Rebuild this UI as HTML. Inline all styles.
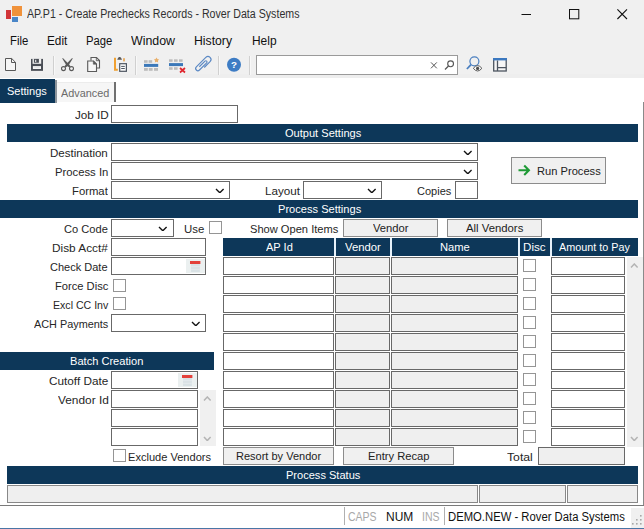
<!DOCTYPE html>
<html><head><meta charset="utf-8"><title>AP.P1 - Create Prechecks Records</title>
<style>
html,body{margin:0;padding:0;}
body{width:644px;height:529px;position:relative;overflow:hidden;background:#fff;font-family:"Liberation Sans",Arial,sans-serif;}
.t{position:absolute;white-space:nowrap;line-height:16px;transform-origin:0 50%;display:block;}
.b{position:absolute;box-sizing:border-box;}
.r{position:absolute;}
</style></head><body>
<div class="r" style="left:0px;top:0px;width:644px;height:78px;background:#f0f0f0;"></div>
<div class="r" style="left:0px;top:74px;width:644px;height:4px;background:#eeeeee;"></div>
<div class="r" style="left:6px;top:10px;width:5px;height:9px;background:#d13438;"></div>
<div class="r" style="left:12px;top:6px;width:10px;height:10px;background:#f0923b;"></div>
<div class="r" style="left:12px;top:17px;width:6px;height:5px;background:#4a86c8;"></div>
<span class="t" style="left:26.80px;top:5.84px;font-size:12px;color:#303030;transform:scaleX(0.8870);">AP.P1 - Create Prechecks Records - Rover Data Systems</span>
<svg class="r" style="left:515px;top:4px" width="120" height="22"><path d="M6.500 10.500h9.500" stroke="#111" stroke-width="1"/><rect x="54.500" y="5.500" width="9.300" height="9.300" fill="none" stroke="#111" stroke-width="1"/><path d="M102.400 5.400l9.600 9.600M112 5.400l-9.600 9.600" stroke="#111" stroke-width="1.100"/></svg>
<span class="t" style="left:10.00px;top:32.84px;font-size:12px;color:#111;transform:scaleX(0.9464);">File</span>
<span class="t" style="left:47.00px;top:32.84px;font-size:12px;color:#111;transform:scaleX(0.9817);">Edit</span>
<span class="t" style="left:85.75px;top:32.84px;font-size:12px;color:#111;transform:scaleX(0.9384);">Page</span>
<span class="t" style="left:130.75px;top:32.84px;font-size:12px;color:#111;transform:scaleX(1.0321);">Window</span>
<span class="t" style="left:194.00px;top:32.84px;font-size:12px;color:#111;transform:scaleX(1.0191);">History</span>
<span class="t" style="left:251.50px;top:32.84px;font-size:12px;color:#111;transform:scaleX(0.9947);">Help</span>
<div class="r" style="left:53px;top:56px;width:1px;height:19px;background:#d0d0d0;"></div>
<div class="r" style="left:54px;top:56px;width:1px;height:19px;background:#f8f8f8;"></div>
<div class="r" style="left:135px;top:56px;width:1px;height:19px;background:#d0d0d0;"></div>
<div class="r" style="left:136px;top:56px;width:1px;height:19px;background:#f8f8f8;"></div>
<div class="r" style="left:218px;top:56px;width:1px;height:19px;background:#d0d0d0;"></div>
<div class="r" style="left:219px;top:56px;width:1px;height:19px;background:#f8f8f8;"></div>
<div class="r" style="left:249px;top:56px;width:1px;height:19px;background:#d0d0d0;"></div>
<div class="r" style="left:250px;top:56px;width:1px;height:19px;background:#f8f8f8;"></div>
<div class="b" style="left:256px;top:55px;width:202px;height:20px;background:#fff;border:1px solid #9a9a9a;"></div>
<div class="r" style="left:0px;top:78px;width:644px;height:428px;background:#fff;"></div>
<div class="r" style="left:643px;top:101.5px;width:1px;height:404.5px;background:#8a8a8a;"></div>
<div class="r" style="left:0px;top:504.6px;width:644px;height:0.5px;background:#d0d0d0;"></div>
<div class="r" style="left:0px;top:505px;width:644px;height:1.4px;background:#7a7a7a;"></div>
<div class="r" style="left:0px;top:79px;width:54.5px;height:23.5px;background:#0d3759;"></div>
<div class="r" style="left:55px;top:80px;width:2px;height:22.5px;background:#8e959c;"></div>
<span class="t" style="left:7.00px;top:83.32px;font-size:11.5px;color:#fff;transform:scaleX(0.9578);">Settings</span>
<div class="r" style="left:57px;top:82px;width:57px;height:20px;background:#f6f6f6;"></div>
<div class="r" style="left:113.8px;top:82.3px;width:2px;height:19.5px;background:#707070;"></div>
<div class="r" style="left:57px;top:82px;width:57px;height:1px;background:#ececec;"></div>
<span class="t" style="left:60.50px;top:85.02px;font-size:11.5px;color:#6a6a6a;transform:scaleX(0.9443);">Advanced</span>
<div class="r" style="left:7px;top:124px;width:631px;height:18px;background:#0d3759;"></div>
<span class="t" style="left:284.50px;top:125.02px;font-size:11.5px;color:#fff;transform:scaleX(0.9613);">Output Settings</span>
<div class="r" style="left:0px;top:200px;width:638px;height:18px;background:#0d3759;"></div>
<span class="t" style="left:277.50px;top:201.02px;font-size:11.5px;color:#fff;transform:scaleX(0.9642);">Process Settings</span>
<div class="r" style="left:0px;top:352px;width:214px;height:18px;background:#0d3759;"></div>
<span class="t" style="left:70.00px;top:353.02px;font-size:11.5px;color:#fff;transform:scaleX(0.9636);">Batch Creation</span>
<div class="r" style="left:7px;top:466px;width:631px;height:18px;background:#0d3759;"></div>
<span class="t" style="left:286.00px;top:467.02px;font-size:11.5px;color:#fff;transform:scaleX(0.9607);">Process Status</span>
<span class="t" style="left:74.50px;top:107.19px;font-size:11px;color:#262626;transform:scaleX(1.0632);">Job ID</span>
<div class="b" style="left:111px;top:105px;width:127px;height:18px;background:#fff;border:1px solid #686868;"></div>
<span class="t" style="left:50.00px;top:145.19px;font-size:11px;color:#262626;transform:scaleX(1.0503);">Destination</span>
<div class="b" style="left:111px;top:143px;width:367px;height:18px;background:#fff;border:1px solid #686868;"></div>
<svg class="r" style="left:462.70px;top:149.60px" width="9.6" height="5.8"><path d="M1 1 L4.8 4.8 L8.6 1" fill="none" stroke="#111" stroke-width="1.35"/></svg>
<span class="t" style="left:54.50px;top:164.19px;font-size:11px;color:#262626;transform:scaleX(1.0257);">Process In</span>
<div class="b" style="left:111px;top:162px;width:367px;height:18px;background:#fff;border:1px solid #686868;"></div>
<svg class="r" style="left:462.70px;top:168.60px" width="9.6" height="5.8"><path d="M1 1 L4.8 4.8 L8.6 1" fill="none" stroke="#111" stroke-width="1.35"/></svg>
<span class="t" style="left:72.00px;top:183.19px;font-size:11px;color:#262626;transform:scaleX(1.0276);">Format</span>
<div class="b" style="left:111px;top:181px;width:119px;height:18px;background:#fff;border:1px solid #686868;"></div>
<svg class="r" style="left:215.20px;top:187.60px" width="9.6" height="5.8"><path d="M1 1 L4.8 4.8 L8.6 1" fill="none" stroke="#111" stroke-width="1.35"/></svg>
<span class="t" style="left:265.00px;top:183.19px;font-size:11px;color:#262626;transform:scaleX(1.0613);">Layout</span>
<div class="b" style="left:303px;top:181px;width:79px;height:18px;background:#fff;border:1px solid #686868;"></div>
<svg class="r" style="left:367.20px;top:187.60px" width="9.6" height="5.8"><path d="M1 1 L4.8 4.8 L8.6 1" fill="none" stroke="#111" stroke-width="1.35"/></svg>
<span class="t" style="left:417.00px;top:183.19px;font-size:11px;color:#262626;transform:scaleX(1.0017);">Copies</span>
<div class="b" style="left:455px;top:181px;width:23px;height:18px;background:#fff;border:1px solid #686868;"></div>
<div class="b" style="left:511px;top:157px;width:95px;height:27px;background:#f0f0f0;border:1px solid #8c8c8c;"></div>
<svg class="r" style="left:517px;top:164px" width="14" height="13"><path d="M1.500 6.300h10M7.200 1.600l4.700 4.700l-4.700 4.700" fill="none" stroke="#1f9a36" stroke-width="2.100"/></svg>
<span class="t" style="left:537.00px;top:162.82px;font-size:11.5px;color:#222;transform:scaleX(0.9676);">Run Process</span>
<span class="t" style="left:64.00px;top:221.19px;font-size:11px;color:#262626;transform:scaleX(1.0089);">Co Code</span>
<div class="b" style="left:111px;top:219px;width:63px;height:18px;background:#fff;border:1px solid #686868;"></div>
<svg class="r" style="left:158.20px;top:225.60px" width="9.6" height="5.8"><path d="M1 1 L4.8 4.8 L8.6 1" fill="none" stroke="#111" stroke-width="1.35"/></svg>
<span class="t" style="left:183.50px;top:221.19px;font-size:11px;color:#262626;transform:scaleX(1.0377);">Use</span>
<div class="b" style="left:209px;top:221px;width:13px;height:13px;background:#fff;border:1px solid #959595;"></div>
<span class="t" style="left:250.00px;top:221.19px;font-size:11px;color:#262626;transform:scaleX(1.0099);">Show Open Items</span>
<div class="b" style="left:343px;top:219px;width:95px;height:18px;background:#f0f0f0;border:1px solid #8c8c8c;"></div>
<span class="t" style="left:372.50px;top:219.82px;font-size:11.5px;color:#222;transform:scaleX(0.9753);">Vendor</span>
<div class="b" style="left:447px;top:219px;width:95px;height:18px;background:#f0f0f0;border:1px solid #8c8c8c;"></div>
<span class="t" style="left:465.50px;top:219.82px;font-size:11.5px;color:#222;transform:scaleX(0.9850);">All Vendors</span>
<span class="t" style="left:52.00px;top:240.19px;font-size:11px;color:#262626;transform:scaleX(1.0738);">Disb Acct#</span>
<div class="b" style="left:111px;top:238px;width:95px;height:18px;background:#fff;border:1px solid #686868;"></div>
<span class="t" style="left:50.25px;top:259.19px;font-size:11px;color:#262626;transform:scaleX(1.0014);">Check Date</span>
<div class="b" style="left:111px;top:257px;width:95px;height:18px;background:#fff;border:1px solid #686868;"></div>
<svg class="r" style="left:186px;top:259px" width="19" height="14" viewBox="0 0 19 14"><rect x="0" y="0" width="19" height="14" fill="#ebf0f0"/><rect x="4" y="2" width="10.400" height="3" fill="#e3413b"/><rect x="5" y="5" width="8.800" height="8" fill="#d9e2e5"/><path d="M5 7.700h8.800M5 10.300h8.800" stroke="#e9eef0" stroke-width="0.700"/></svg>
<span class="t" style="left:55.00px;top:278.19px;font-size:11px;color:#262626;transform:scaleX(1.0140);">Force Disc</span>
<div class="b" style="left:113px;top:279px;width:13px;height:13px;background:#fff;border:1px solid #959595;"></div>
<span class="t" style="left:52.50px;top:297.19px;font-size:11px;color:#262626;transform:scaleX(0.9625);">Excl CC Inv</span>
<div class="b" style="left:113px;top:297px;width:13px;height:13px;background:#fff;border:1px solid #959595;"></div>
<span class="t" style="left:33.50px;top:316.19px;font-size:11px;color:#262626;transform:scaleX(0.9882);">ACH Payments</span>
<div class="b" style="left:111px;top:314px;width:95px;height:18px;background:#fff;border:1px solid #686868;"></div>
<svg class="r" style="left:190.70px;top:320.60px" width="9.6" height="5.8"><path d="M1 1 L4.8 4.8 L8.6 1" fill="none" stroke="#111" stroke-width="1.35"/></svg>
<span class="t" style="left:49.00px;top:373.19px;font-size:11px;color:#262626;transform:scaleX(1.0696);">Cutoff Date</span>
<div class="b" style="left:111px;top:371px;width:87px;height:18px;background:#fff;border:1px solid #686868;"></div>
<svg class="r" style="left:178px;top:373px" width="19" height="14" viewBox="0 0 19 14"><rect x="0" y="0" width="19" height="14" fill="#ebf0f0"/><rect x="4" y="2" width="10.400" height="3" fill="#e3413b"/><rect x="5" y="5" width="8.800" height="8" fill="#d9e2e5"/><path d="M5 7.700h8.800M5 10.300h8.800" stroke="#e9eef0" stroke-width="0.700"/></svg>
<span class="t" style="left:57.50px;top:392.19px;font-size:11px;color:#262626;transform:scaleX(1.0787);">Vendor Id</span>
<div class="b" style="left:111px;top:390px;width:87px;height:18px;background:#fff;border:1px solid #686868;"></div>
<div class="b" style="left:111px;top:409px;width:87px;height:18px;background:#fff;border:1px solid #686868;"></div>
<div class="b" style="left:111px;top:428px;width:87px;height:18px;background:#fff;border:1px solid #686868;"></div>
<div class="r" style="left:200px;top:390px;width:16px;height:56px;background:#f0f0f0;"></div>
<svg class="r" style="left:203.40px;top:396.20px" width="8.6" height="5.6"><path d="M1 4.6 L4.3 1 L7.6 4.6" fill="none" stroke="#b4b4b4" stroke-width="1.5"/></svg>
<svg class="r" style="left:203.40px;top:435.50px" width="8.6" height="5.6"><path d="M1 1 L4.3 4.6 L7.6 1" fill="none" stroke="#b4b4b4" stroke-width="1.5"/></svg>
<div class="b" style="left:113px;top:449px;width:13px;height:13px;background:#fff;border:1px solid #959595;"></div>
<span class="t" style="left:128.25px;top:448.79px;font-size:11px;color:#262626;transform:scaleX(1.0060);">Exclude Vendors</span>
<div class="r" style="left:334px;top:238px;width:2px;height:18px;background:#e6f1fa;"></div>
<div class="r" style="left:390px;top:238px;width:2px;height:18px;background:#e6f1fa;"></div>
<div class="r" style="left:518px;top:238px;width:2px;height:18px;background:#e6f1fa;"></div>
<div class="r" style="left:550px;top:238px;width:2px;height:18px;background:#e6f1fa;"></div>
<div class="r" style="left:223px;top:238px;width:111px;height:18px;background:#0d3759;"></div>
<span class="t" style="left:265.50px;top:238.82px;font-size:11.5px;color:#fff;transform:scaleX(0.9599);">AP Id</span>
<div class="r" style="left:336px;top:238px;width:54px;height:18px;background:#0d3759;"></div>
<span class="t" style="left:344.50px;top:238.82px;font-size:11.5px;color:#fff;transform:scaleX(0.9822);">Vendor</span>
<div class="r" style="left:392px;top:238px;width:126px;height:18px;background:#0d3759;"></div>
<span class="t" style="left:439.50px;top:238.82px;font-size:11.5px;color:#fff;transform:scaleX(0.9714);">Name</span>
<div class="r" style="left:520px;top:238px;width:30px;height:18px;background:#0d3759;"></div>
<span class="t" style="left:523.25px;top:238.82px;font-size:11.5px;color:#fff;transform:scaleX(1.0085);">Disc</span>
<div class="r" style="left:552px;top:238px;width:86px;height:18px;background:#0d3759;"></div>
<span class="t" style="left:558.50px;top:238.82px;font-size:11.5px;color:#fff;transform:scaleX(0.9386);">Amount to Pay</span>
<div class="b" style="left:223px;top:257px;width:111px;height:18px;background:#fff;border:1px solid #686868;"></div>
<div class="b" style="left:335px;top:257px;width:55px;height:18px;background:#efefef;border:1px solid #686868;"></div>
<div class="b" style="left:391px;top:257px;width:127px;height:18px;background:#efefef;border:1px solid #686868;"></div>
<div class="b" style="left:523px;top:259px;width:13px;height:13px;background:#fff;border:1px solid #959595;"></div>
<div class="b" style="left:551px;top:257px;width:74px;height:18px;background:#fff;border:1px solid #686868;"></div>
<div class="b" style="left:223px;top:276px;width:111px;height:18px;background:#fff;border:1px solid #686868;"></div>
<div class="b" style="left:335px;top:276px;width:55px;height:18px;background:#efefef;border:1px solid #686868;"></div>
<div class="b" style="left:391px;top:276px;width:127px;height:18px;background:#efefef;border:1px solid #686868;"></div>
<div class="b" style="left:523px;top:278px;width:13px;height:13px;background:#fff;border:1px solid #959595;"></div>
<div class="b" style="left:551px;top:276px;width:74px;height:18px;background:#fff;border:1px solid #686868;"></div>
<div class="b" style="left:223px;top:295px;width:111px;height:18px;background:#fff;border:1px solid #686868;"></div>
<div class="b" style="left:335px;top:295px;width:55px;height:18px;background:#efefef;border:1px solid #686868;"></div>
<div class="b" style="left:391px;top:295px;width:127px;height:18px;background:#efefef;border:1px solid #686868;"></div>
<div class="b" style="left:523px;top:297px;width:13px;height:13px;background:#fff;border:1px solid #959595;"></div>
<div class="b" style="left:551px;top:295px;width:74px;height:18px;background:#fff;border:1px solid #686868;"></div>
<div class="b" style="left:223px;top:314px;width:111px;height:18px;background:#fff;border:1px solid #686868;"></div>
<div class="b" style="left:335px;top:314px;width:55px;height:18px;background:#efefef;border:1px solid #686868;"></div>
<div class="b" style="left:391px;top:314px;width:127px;height:18px;background:#efefef;border:1px solid #686868;"></div>
<div class="b" style="left:523px;top:316px;width:13px;height:13px;background:#fff;border:1px solid #959595;"></div>
<div class="b" style="left:551px;top:314px;width:74px;height:18px;background:#fff;border:1px solid #686868;"></div>
<div class="b" style="left:223px;top:333px;width:111px;height:18px;background:#fff;border:1px solid #686868;"></div>
<div class="b" style="left:335px;top:333px;width:55px;height:18px;background:#efefef;border:1px solid #686868;"></div>
<div class="b" style="left:391px;top:333px;width:127px;height:18px;background:#efefef;border:1px solid #686868;"></div>
<div class="b" style="left:523px;top:335px;width:13px;height:13px;background:#fff;border:1px solid #959595;"></div>
<div class="b" style="left:551px;top:333px;width:74px;height:18px;background:#fff;border:1px solid #686868;"></div>
<div class="b" style="left:223px;top:352px;width:111px;height:18px;background:#fff;border:1px solid #686868;"></div>
<div class="b" style="left:335px;top:352px;width:55px;height:18px;background:#efefef;border:1px solid #686868;"></div>
<div class="b" style="left:391px;top:352px;width:127px;height:18px;background:#efefef;border:1px solid #686868;"></div>
<div class="b" style="left:523px;top:354px;width:13px;height:13px;background:#fff;border:1px solid #959595;"></div>
<div class="b" style="left:551px;top:352px;width:74px;height:18px;background:#fff;border:1px solid #686868;"></div>
<div class="b" style="left:223px;top:371px;width:111px;height:18px;background:#fff;border:1px solid #686868;"></div>
<div class="b" style="left:335px;top:371px;width:55px;height:18px;background:#efefef;border:1px solid #686868;"></div>
<div class="b" style="left:391px;top:371px;width:127px;height:18px;background:#efefef;border:1px solid #686868;"></div>
<div class="b" style="left:523px;top:373px;width:13px;height:13px;background:#fff;border:1px solid #959595;"></div>
<div class="b" style="left:551px;top:371px;width:74px;height:18px;background:#fff;border:1px solid #686868;"></div>
<div class="b" style="left:223px;top:390px;width:111px;height:18px;background:#fff;border:1px solid #686868;"></div>
<div class="b" style="left:335px;top:390px;width:55px;height:18px;background:#efefef;border:1px solid #686868;"></div>
<div class="b" style="left:391px;top:390px;width:127px;height:18px;background:#efefef;border:1px solid #686868;"></div>
<div class="b" style="left:523px;top:392px;width:13px;height:13px;background:#fff;border:1px solid #959595;"></div>
<div class="b" style="left:551px;top:390px;width:74px;height:18px;background:#fff;border:1px solid #686868;"></div>
<div class="b" style="left:223px;top:409px;width:111px;height:18px;background:#fff;border:1px solid #686868;"></div>
<div class="b" style="left:335px;top:409px;width:55px;height:18px;background:#efefef;border:1px solid #686868;"></div>
<div class="b" style="left:391px;top:409px;width:127px;height:18px;background:#efefef;border:1px solid #686868;"></div>
<div class="b" style="left:523px;top:411px;width:13px;height:13px;background:#fff;border:1px solid #959595;"></div>
<div class="b" style="left:551px;top:409px;width:74px;height:18px;background:#fff;border:1px solid #686868;"></div>
<div class="b" style="left:223px;top:428px;width:111px;height:18px;background:#fff;border:1px solid #686868;"></div>
<div class="b" style="left:335px;top:428px;width:55px;height:18px;background:#efefef;border:1px solid #686868;"></div>
<div class="b" style="left:391px;top:428px;width:127px;height:18px;background:#efefef;border:1px solid #686868;"></div>
<div class="b" style="left:523px;top:430px;width:13px;height:13px;background:#fff;border:1px solid #959595;"></div>
<div class="b" style="left:551px;top:428px;width:74px;height:18px;background:#fff;border:1px solid #686868;"></div>
<div class="r" style="left:627px;top:257px;width:16px;height:190px;background:#f0f0f0;"></div>
<svg class="r" style="left:630.30px;top:263.40px" width="8.6" height="5.6"><path d="M1 4.6 L4.3 1 L7.6 4.6" fill="none" stroke="#b4b4b4" stroke-width="1.5"/></svg>
<svg class="r" style="left:630.30px;top:435.80px" width="8.6" height="5.6"><path d="M1 1 L4.3 4.6 L7.6 1" fill="none" stroke="#b4b4b4" stroke-width="1.5"/></svg>
<div class="b" style="left:223px;top:447px;width:111px;height:18px;background:#f0f0f0;border:1px solid #8c8c8c;"></div>
<span class="t" style="left:236.25px;top:447.82px;font-size:11.5px;color:#222;transform:scaleX(0.9572);">Resort by Vendor</span>
<div class="b" style="left:343px;top:447px;width:111px;height:18px;background:#f0f0f0;border:1px solid #8c8c8c;"></div>
<span class="t" style="left:368.25px;top:447.82px;font-size:11.5px;color:#222;transform:scaleX(0.9727);">Entry Recap</span>
<span class="t" style="left:506.50px;top:448.89px;font-size:11px;color:#262626;transform:scaleX(1.1104);">Total</span>
<div class="b" style="left:538px;top:447px;width:87px;height:18px;background:#efefef;border:1px solid #686868;"></div>
<div class="b" style="left:7px;top:485px;width:471px;height:18px;background:#efefef;border:1px solid #888;"></div>
<div class="b" style="left:479px;top:485px;width:87px;height:18px;background:#efefef;border:1px solid #888;"></div>
<div class="b" style="left:567px;top:485px;width:71px;height:18px;background:#efefef;border:1px solid #888;"></div>
<div class="r" style="left:0px;top:506px;width:644px;height:23px;background:#fff;"></div>
<div class="r" style="left:0px;top:527.6px;width:644px;height:1.4px;background:#4a76a6;"></div>
<div class="r" style="left:344px;top:507px;width:1px;height:18px;background:#b0b0b0;"></div>
<div class="r" style="left:443.5px;top:507px;width:1px;height:18px;background:#b0b0b0;"></div>
<span class="t" style="left:348.25px;top:508.54px;font-size:12px;color:#a8a8a8;transform:scaleX(0.8737);">CAPS</span>
<span class="t" style="left:386.00px;top:508.54px;font-size:12px;color:#111;transform:scaleX(0.9990);">NUM</span>
<span class="t" style="left:421.50px;top:508.54px;font-size:12px;color:#a8a8a8;transform:scaleX(0.8773);">INS</span>
<span class="t" style="left:448.25px;top:508.54px;font-size:12px;color:#111;transform:scaleX(0.9403);">DEMO.NEW - Rover Data Systems</span>
<div class="r" style="left:631px;top:508px;width:13px;height:20px;background:#f0f0f0;"></div>
<svg class="r" style="left:631.900px;top:514px" width="12" height="12"><g fill="#a8a8a8"><rect x="8" y="1" width="1.600" height="1.600"/><rect x="4" y="5" width="1.600" height="1.600"/><rect x="8" y="5" width="1.600" height="1.600"/><rect x="0" y="9" width="1.600" height="1.600"/><rect x="4" y="9" width="1.600" height="1.600"/><rect x="8" y="9" width="1.600" height="1.600"/></g></svg>
<svg class="r" style="left:0;top:52px" width="644" height="26" viewBox="0 52 644 26">
<!-- new -->
<path d="M5.5 58.5h6.2l3.8 3.8v8.2h-10z" fill="#f6f6f6" stroke="#585858" stroke-width="1"/>
<path d="M11.5 58.5v4h4" fill="none" stroke="#585858" stroke-width="1"/>
<!-- save -->
<rect x="31" y="58.900" width="12" height="11.950" fill="#4a4e56"/>
<rect x="32.550" y="58.500" width="8.650" height="5.300" fill="#f0f0f0"/>
<rect x="33.900" y="58.900" width="5" height="3.850" fill="#4a4e56"/>
<rect x="35.100" y="59.800" width="1.150" height="2.300" fill="#e8e8e8"/>
<rect x="32.900" y="66.100" width="8.100" height="2.900" fill="#f6f6f6"/><rect x="34.200" y="67.300" width="5.500" height="0.500" fill="#d8dce0"/>
<!-- scissors -->
<path d="M62.100 58.300L63.100 58.200L68.700 64L70.700 66.600L69.400 67.400L66.500 65.400z" fill="#5a5a5a"/>
<path d="M72.900 58.300L71.900 58.200L66.300 64L64.300 66.600L65.600 67.400L68.500 65.400z" fill="#5a5a5a"/>
<circle cx="63.500" cy="68.600" r="2" fill="#f0f0f0" stroke="#5a5a5a" stroke-width="1.100"/><circle cx="71.500" cy="68.600" r="2" fill="#f0f0f0" stroke="#5a5a5a" stroke-width="1.100"/>
<!-- copy -->
<path d="M91 60.500v-3h5.500l3 3v7.500h-3" fill="#f4f4f4" stroke="#5a5a5a" stroke-width="1.100"/>
<path d="M96.300 57.700v3h3" fill="none" stroke="#5a5a5a" stroke-width="0.900"/>
<path d="M87.700 61h5.800l3 3v7.500h-8.800z" fill="#f6f6f6" stroke="#5a5a5a" stroke-width="1.100"/>
<path d="M93.300 61v3.200h3.200z" fill="#5a5a5a" stroke="#5a5a5a" stroke-width="0.600"/>
<!-- paste -->
<path d="M115 57.800v11.900h2.800" fill="none" stroke="#f0a030" stroke-width="2"/>
<rect x="123.200" y="58.200" width="1.600" height="3.200" fill="#e8a04a"/>
<path d="M117.200 59.700l0.800-1.700l1-1h1.200l1 1l0.800 1.700z" fill="#5a5a5a"/>
<rect x="119.700" y="63.700" width="6.700" height="7.600" fill="#fcfcfc" stroke="#4d5560" stroke-width="1.200"/>
<path d="M121.200 66.400h3.600M121.200 68.500h3.600" stroke="#4d5560" stroke-width="1"/>
<!-- insert row -->
<g fill="#bcbcbc"><rect x="144" y="60.200" width="3.600" height="2.600"/><rect x="148.600" y="60.200" width="3.600" height="2.600"/>
<rect x="144" y="68" width="3.800" height="2.800"/><rect x="148.800" y="68" width="3.800" height="2.800"/><rect x="154" y="68" width="4" height="2.800"/></g>
<rect x="144" y="63.900" width="14.200" height="3" fill="#3b78b9"/>
<path d="M156.500 57.600l0.900 1.500l1.700 0.300l-1.200 1.300l0.300 1.800l-1.700-0.800l-1.700 0.800l0.300-1.800l-1.200-1.300l1.700-0.300z" fill="#e9b06c"/>
<!-- delete row -->
<g fill="#bcbcbc"><rect x="169" y="59.300" width="3.600" height="2.500"/><rect x="174" y="59.300" width="3.600" height="2.500"/><rect x="179" y="59.300" width="3.600" height="2.500"/>
<rect x="169" y="67.200" width="3.600" height="2.600"/><rect x="174" y="67.200" width="3.600" height="2.600"/></g>
<rect x="169" y="63.100" width="14" height="3" fill="#3b78b9"/>
<path d="M180 68l5 4.500M185 68l-5 4.500" stroke="#e0262e" stroke-width="1.700"/>
<!-- paperclip -->
<g transform="translate(203.200 64.300) rotate(45)"><path d="M3 1.500L3 -6.700A3 3 0 0 0 -3 -6.700L-3 6.700A2.200 2.200 0 0 0 1.400 6.700L1.400 -3.500A1.200 1.200 0 0 0 -1 -3.500L-1 4.500" fill="none" stroke="#5a88c4" stroke-width="1.150"/></g>
<!-- help -->
<circle cx="234" cy="64.800" r="7" fill="#3d7cc4"/>
<text x="234" y="68.400" font-family="Liberation Sans, Arial, sans-serif" font-size="9.800" font-weight="bold" fill="#fff" text-anchor="middle">?</text>
<!-- clear x -->
<path d="M431 62.400l5.800 5.900M436.800 62.400l-5.800 5.900" stroke="#555" stroke-width="1"/>
<!-- small magnifier -->
<circle cx="450.600" cy="63.800" r="2.900" fill="none" stroke="#555" stroke-width="1.100"/><path d="M448.500 66l-3.500 3.500" stroke="#555" stroke-width="1.300"/>
<!-- search eye -->
<circle cx="474.400" cy="61.300" r="4.500" fill="none" stroke="#4a7fc0" stroke-width="1.200"/><path d="M471 64.700l-4.100 4.300" stroke="#4a7fc0" stroke-width="1.800"/>
<path d="M473.300 68.300q4.300-5.400 8.600 0q-4.300 5.400-8.600 0z" fill="#f8f8f8" stroke="#5a5a5a" stroke-width="1"/><circle cx="477.600" cy="68.400" r="1.600" fill="#4a4a4a"/>
<!-- layout -->
<rect x="493.700" y="58.700" width="12.500" height="12.300" fill="#f6f6f6" stroke="#4d5560" stroke-width="1.300"/>
<rect x="493.050" y="58" width="13.800" height="2.400" fill="#3b78c0"/>
<path d="M497.500 60.400v10.600M497.500 67.700h8.700" stroke="#4d5560" stroke-width="1.300"/>
</svg>

</body></html>
